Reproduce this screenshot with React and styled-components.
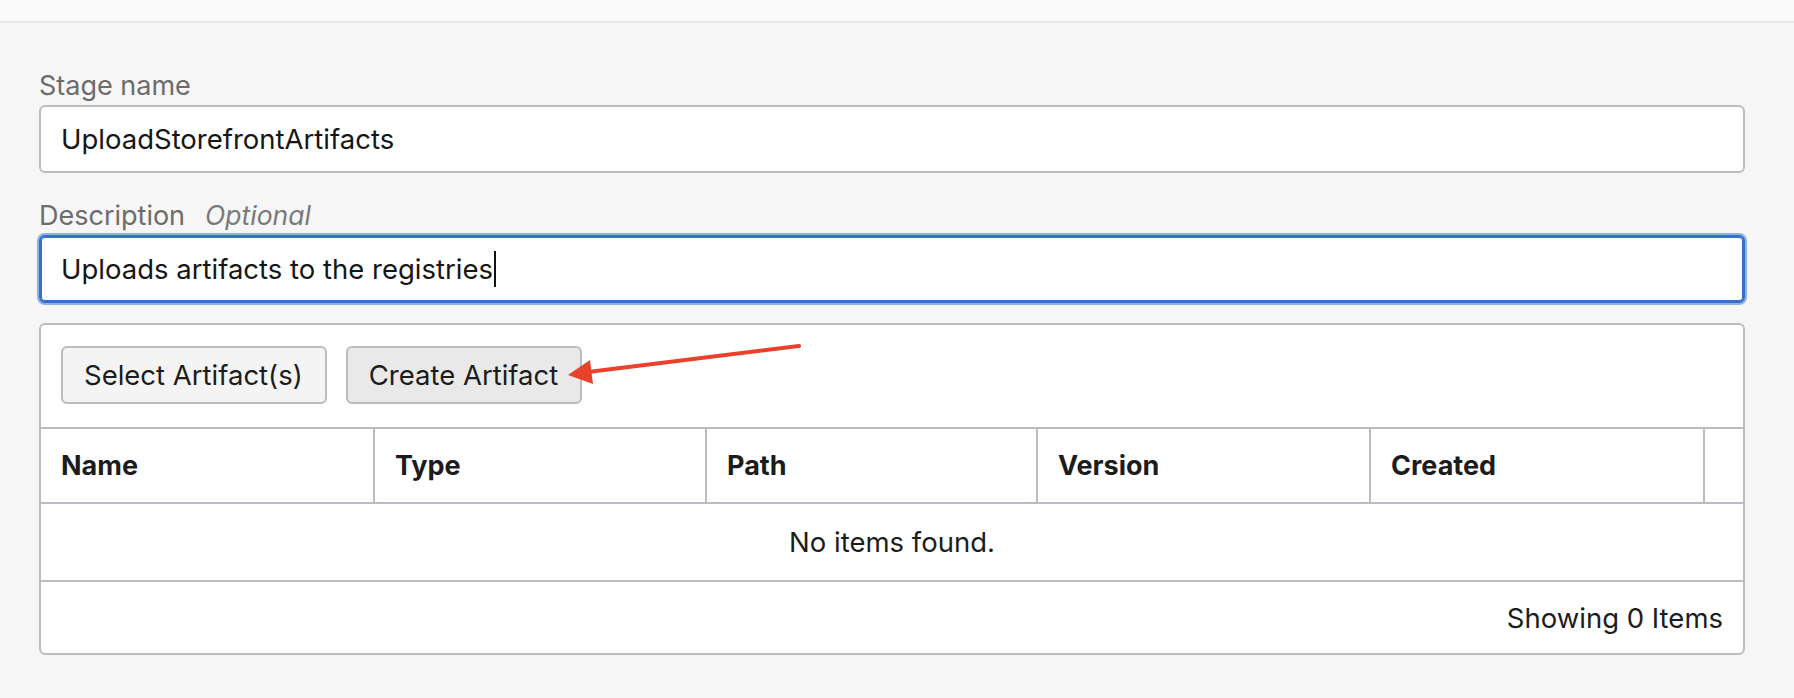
import React from 'react';
import styled, { createGlobalStyle } from 'styled-components';

const GlobalStyle = createGlobalStyle`
  body {
    margin: 0;
    background: #f6f6f6;
    font-family: Inter, "Liberation Sans", Arial, sans-serif;
    color: #1c1c1c;
  }
`;

const TopBar = styled.div`
  height: 21px;
  background: #fafafa;
  border-bottom: 2px solid #e6e6e6;
`;

const Main = styled.main`
  padding: 46px 49px 40px 39px;
`;

const Field = styled.div`
  display: flex;
  flex-direction: column;
  margin-bottom: ${(p) => p.$gap || 0}px;
`;

const Label = styled.label`
  display: flex;
  align-items: baseline;
  gap: 20px;
  font-size: 27px;
  line-height: 34px;
  color: #6c6c6c;
  margin-bottom: 2px;

  em {
    color: #7a7a7a;
    font-size: 26.5px;
  }
`;

const TextBox = styled.div`
  box-sizing: border-box;
  height: 68px;
  display: flex;
  align-items: center;
  padding: 0 20px;
  background: #fff;
  border: 2px solid ${(p) => (p.$focused ? '#3670c7' : '#b9bdc1')};
  border-radius: 6px;
  font-size: 27.5px;
  color: #161616;
  box-shadow: ${(p) =>
    p.$focused ? 'inset 0 0 0 1px #3670c7, 0 0 0 2px #8fb0e1' : 'none'};
`;

const Caret = styled.span`
  display: inline-block;
  width: 2px;
  height: 36px;
  margin-left: 1px;
  background: #111;
`;

const Panel = styled.section`
  position: relative;
  background: #fff;
  border: 2px solid #b9bdc1;
  border-radius: 6px;
`;

const Toolbar = styled.div`
  display: flex;
  gap: 19px;
  padding: 21px 20px 23px;
`;

const Button = styled.button`
  box-sizing: border-box;
  height: 58px;
  padding: 0 22px 0 21px;
  font-family: inherit;
  font-size: 27.5px;
  color: #1c1c1c;
  background: ${(p) => (p.$active ? '#e9e9e9' : '#f4f4f4')};
  border: 2px solid #b9bdc1;
  border-radius: 6px;
`;

const Table = styled.table`
  width: 100%;
  border-collapse: collapse;
  table-layout: fixed;
`;

const Th = styled.th`
  height: 73px;
  padding: 0 20px;
  text-align: left;
  font-size: 27px;
  font-weight: 700;
  color: #1c1c1c;
  border-top: 2px solid #b9bdc1;
  border-bottom: 2px solid #b9bdc1;
  border-right: ${(p) => (p.$last ? 'none' : '2px solid #b9bdc1')};
`;

const EmptyCell = styled.td`
  height: 74px;
  text-align: center;
  font-size: 27.5px;
  color: #1c1c1c;
  border-bottom: 2px solid #b9bdc1;
`;

const Footer = styled.div`
  height: 71px;
  display: flex;
  align-items: center;
  justify-content: flex-end;
  padding-right: 20px;
  font-size: 27.5px;
  color: #1c1c1c;
`;

const Arrow = styled.svg`
  position: absolute;
  left: 519px;
  top: 8px;
  pointer-events: none;
`;

const columns = [
  { name: 'Name', width: 333 },
  { name: 'Type', width: 332 },
  { name: 'Path', width: 331 },
  { name: 'Version', width: 333 },
  { name: 'Created', width: 334 },
  { name: '', width: null },
];

const App = () => (
  <>
    <GlobalStyle />
    <TopBar />
    <Main>
      <Field $gap={25}>
        <Label>Stage name</Label>
        <TextBox>UploadStorefrontArtifacts</TextBox>
      </Field>

      <Field $gap={20}>
        <Label>
          Description <em>Optional</em>
        </Label>
        <TextBox $focused>
          Uploads artifacts to the registries
          <Caret />
        </TextBox>
      </Field>

      <Panel>
        <Toolbar>
          <Button>Select Artifact(s)</Button>
          <Button $active>Create Artifact</Button>
        </Toolbar>

        <Arrow width="245" height="60" viewBox="0 0 245 60">
          <line x1="239" y1="13" x2="28" y2="39" stroke="#e8412c" strokeWidth="4" strokeLinecap="round" />
          <polygon points="8,42 30,27 33,51" fill="#e8412c" />
        </Arrow>

        <Table>
          <colgroup>
            {columns.map((c, i) => (
              <col key={i} style={c.width ? { width: c.width } : undefined} />
            ))}
          </colgroup>
          <thead>
            <tr>
              {columns.map((c, i) => (
                <Th key={i} $last={i === columns.length - 1}>
                  {c.name}
                </Th>
              ))}
            </tr>
          </thead>
          <tbody>
            <tr>
              <EmptyCell colSpan={columns.length}>No items found.</EmptyCell>
            </tr>
          </tbody>
        </Table>

        <Footer>Showing 0 Items</Footer>
      </Panel>
    </Main>
  </>
);

export default App;
